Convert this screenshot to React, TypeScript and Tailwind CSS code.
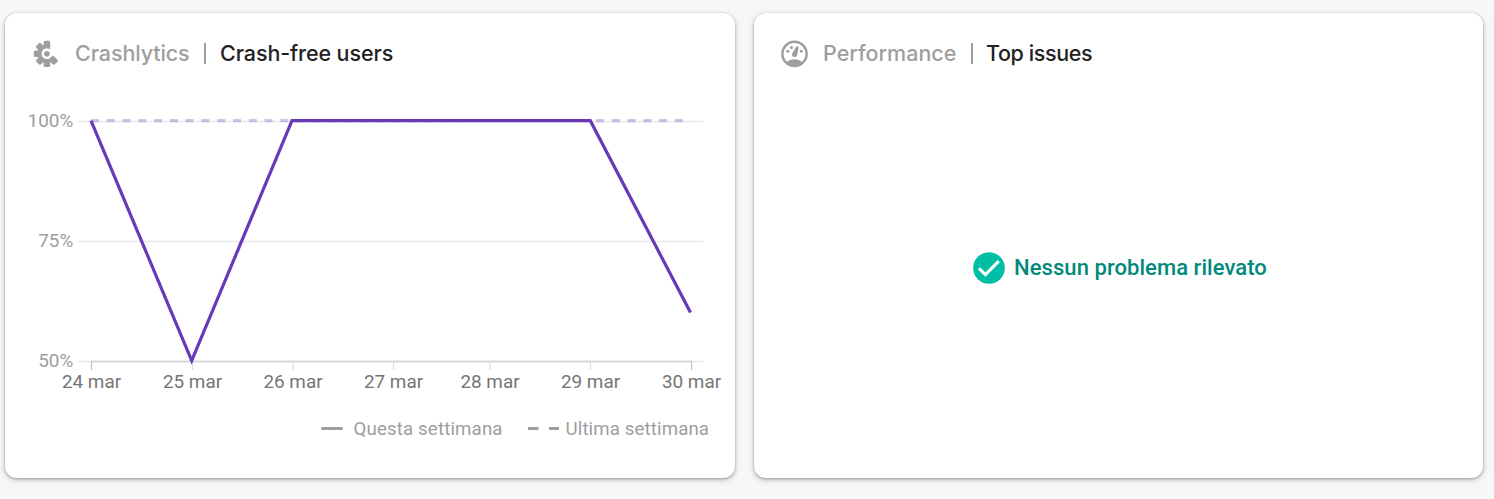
import type { ReactNode } from 'react';

const ticks = [
  { x: 91.5, label: '24 mar', end: true },
  { x: 192.5, label: '25 mar' },
  { x: 293, label: '26 mar' },
  { x: 393.5, label: '27 mar' },
  { x: 490, label: '28 mar' },
  { x: 590.5, label: '29 mar' },
  { x: 691.5, label: '30 mar', end: true },
];

const levels = [
  { y: 121.5, label: '100%' },
  { y: 241.5, label: '75%' },
  { y: 361.5, label: '50%' },
];

function CrashlyticsIcon() {
  return (
    <svg width="28" height="28" viewBox="0 0 28 28" className="mt-[2px] shrink-0">
      <g stroke="#9e9e9e" strokeLinejoin="round" fill="#9e9e9e" strokeWidth="3">
        {[0, 225, 270, 315, 180, 135].map((a) => (
          <rect key={a} x="13.1" y="2.2" width="3.6" height="4.5" transform={`rotate(${a} 14.9 13.8)`} />
        ))}
      </g>
      <path d="M18.1 5.6A9 9 0 1 0 22.4 18.8L19.6 16.2A5.4 5.4 0 1 1 18.1 9.4Z" fill="#9e9e9e" />
      <circle cx="14.9" cy="13.8" r="2.8" fill="#9e9e9e" />
    </svg>
  );
}

function PerformanceIcon() {
  return (
    <svg width="28" height="28" viewBox="0 0 28 28" className="mt-[2px] shrink-0">
      <circle cx="14.5" cy="13.9" r="12.1" fill="none" stroke="#9e9e9e" strokeWidth="2.5" />
      <path d="M6.7 22.2Q9.8 19.2 14.5 19.2T22.3 22.2Q19 25.9 14.5 25.9T6.7 22.2Z" fill="#9e9e9e" />
      <path d="M16.7 6L18.7 6.7L17.2 15A2.6 2.6 0 1 1 12.4 13.2Z" fill="#9e9e9e" />
      <circle cx="7.8" cy="11.2" r="1.5" fill="#9e9e9e" />
      <circle cx="11.5" cy="7.4" r="1.5" fill="#9e9e9e" />
      <circle cx="21.3" cy="11.2" r="1.5" fill="#9e9e9e" />
    </svg>
  );
}

function Card({ children, className }: { children: ReactNode; className: string }) {
  return (
    <section className={`h-[465px] shrink-0 overflow-hidden rounded-[12px] bg-white shadow-[0_1px_3px_rgba(0,0,0,0.28),0_2px_6px_rgba(0,0,0,0.18)] ${className}`}>
      {children}
    </section>
  );
}

function CrashChart() {
  return (
    <svg width="730" height="385" viewBox="5 93 730 385" className="block font-[Roboto,sans-serif]">
      {levels.map((l) => (
        <g key={l.label}>
          <path d={`M78 ${l.y}H703`} stroke="#e8e8e8" strokeWidth="1.3" />
          <text x="73.3" y={l.y + 5.5} textAnchor="end" fontSize="18.9" fill="#9e9e9e">{l.label}</text>
        </g>
      ))}
      <path d="M91 361.5H692" stroke="#d2d2d2" strokeWidth="1.3" />
      {ticks.map((t) => (
        <g key={t.label}>
          <path d={`M${t.x} 361V370`} stroke={t.end ? '#c4c4c4' : '#dedede'} strokeWidth="1.3" />
          <text x={t.x} y="388" textAnchor="middle" fontSize="18.9" fill="#757575">{t.label}</text>
        </g>
      ))}
      <path d="M91 120.7H690" stroke="#673ab7" strokeOpacity="0.3" strokeWidth="3.2" strokeDasharray="8 7.78" />
      <path d="M91 120.7L191.7 360.5L292 120.7H590.3L690.5 312.5" fill="none" stroke="#673ab7" strokeWidth="3.2" />
      <g stroke="#9e9e9e" strokeWidth="3">
        <path d="M322.5 428.5H341.5" strokeLinecap="round" />
        <path d="M528 428.5H538.5M549 428.5H559" />
      </g>
      <g fontSize="18.67" fill="#9e9e9e">
        <text x="353.5" y="435" textLength="149">Questa settimana</text>
        <text x="565.5" y="435" textLength="143.5">Ultima settimana</text>
      </g>
    </svg>
  );
}

export default function App() {
  return (
    <main className="flex h-[499px] w-[1494px] gap-[19px] overflow-hidden bg-[#f5f7f9] pt-[13px] pl-[5px]">
      <Card className="w-[730px]">
        <header className="flex h-20 items-center pl-[27px] font-[Inter,sans-serif] text-[21.5px] font-medium">
          <CrashlyticsIcon />
          <h2 className="ml-[15px] w-[129px] whitespace-nowrap tracking-[-0.1px] text-[#9e9e9e]">Crashlytics</h2>
          <span className="mt-px h-[21px] w-[2px] bg-[#9e9e9e]" />
          <h3 className="ml-[14px] whitespace-nowrap tracking-[-0.1px] text-[#212121]">Crash-free users</h3>
        </header>
        <CrashChart />
      </Card>
      <Card className="w-[729px]">
        <header className="flex h-20 items-center pl-[26px] font-[Inter,sans-serif] text-[21.5px] font-medium">
          <PerformanceIcon />
          <h2 className="ml-[15px] w-[148px] whitespace-nowrap text-[#9e9e9e]">Performance</h2>
          <span className="mt-px h-[21px] w-[2px] bg-[#9e9e9e]" />
          <h3 className="ml-[13px] whitespace-nowrap tracking-[-0.4px] text-[#212121]">Top issues</h3>
        </header>
        <div className="flex h-[350px] items-center justify-center gap-[9px] pl-[3px]">
          <svg width="32" height="32" viewBox="0 0 32 32">
            <circle cx="16" cy="16" r="15.8" fill="#00bfa5" />
            <path d="M6 16.4L12.4 22.6L25.8 9.2" fill="none" stroke="white" strokeWidth="3.1" />
          </svg>
          <p className="mb-[2px] whitespace-nowrap font-[Roboto,sans-serif] text-[22px] font-medium tracking-[0.06px] text-[#00897b]">Nessun problema rilevato</p>
        </div>
      </Card>
    </main>
  );
}
